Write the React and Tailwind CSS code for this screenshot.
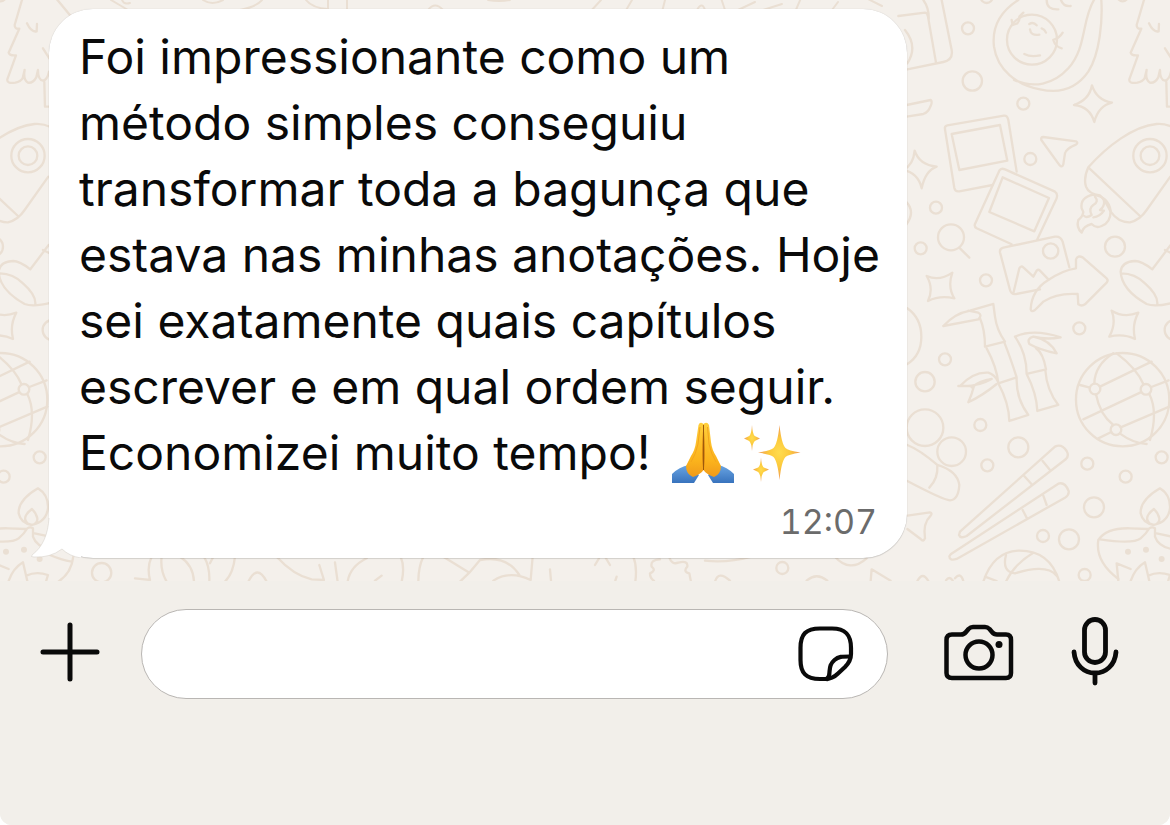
import React from "react";

function Dots({ points }) {
  return points.map(([x, y, r]) => <circle key={`${x}-${y}-${r}`} cx={x} cy={y} r={r} />);
}

/* One tile of doodles; it repeats every 1122 units. */
function Doodles() {
  return (
    <>
      <g transform="translate(900 0) scale(0.3333)">
        <Dots
          points={[
            [204, 85, 18], [217, 243, 29], [370, 311, 18], [391, 477, 18], [260, -9, 18], [668, -12, 16],
            [396, 119, 75], [750, 467, 50], [750, 467, 28],
          ]}
        />
        <path d="M-5 48 L75 38 Q82 38 84 50 L108 188 M70 0 Q88 25 86 60 M22 208 L130 186 Q160 180 155 150 L125 0 M15 90 Q55 140 22 190" />
        <path d="M355 0 C300 35 275 80 282 140 C292 210 350 255 420 268 C480 282 530 265 565 215 C600 160 608 60 604 0 M342 240 C400 265 460 255 505 205 C560 145 545 60 582 0" />
        <path d="M388 72 Q400 64 410 76 M390 88 Q392 108 418 104 M425 85 Q434 88 438 98 M373 162 Q392 172 420 166 M335 60 L338 75 L352 70 Q360 62 358 50 L370 38 M488 98 Q478 115 460 120 Q466 140 485 145 M440 0 Q440 30 475 28 M483 0 Q490 20 512 18" />
        <path d="M732 0 L710 75 Q710 88 724 86 L692 158 Q695 168 714 166 L688 238 Q686 252 712 248 Q728 244 734 235 L740 210 Q735 240 750 248 Q765 250 775 232 L780 210 Q780 240 795 242 Q808 240 813 215 M747 70 Q760 98 776 94 L777 72 M799 245 L801 320 L818 320 M795 145 L814 175 M836 -3 L880 50" />
        <path d="M576 256 Q590 300 636 308 Q595 318 583 366 Q570 320 522 315 Q568 300 576 256Z M44 452 Q58 495 110 500 Q76 512 65 565 Q55 520 10 510 Q40 495 44 452Z" />
        <path d="M350 515 L325 360 Q322 346 312 347 L142 376 Q133 378 135 388 L163 564 Q166 576 178 574 L278 555 M155 402 L300 375 L322 482 L178 510Z" />
        <path d="M335 733 L230 685 Q222 680 225 672 L298 512 Q303 503 315 508 L465 575 Q474 580 470 595 L412 718 M308 532 L447 594 L403 694 L268 636Z" />
        <path d="M430 411 L528 424 Q536 428 528 434 Q500 445 495 460 L490 493 Q486 504 479 496 L424 420 Q422 411 430 411Z" />
        <path d="M20 315 L92 300 Q98 305 92 318 Q85 338 70 342 L20 350" />
        <path d="M565 502 C620 440 700 378 770 372 Q795 370 820 382 M565 502 Q550 535 558 560 Q566 582 600 586 Q615 600 632 635 Q655 668 690 667 Q720 660 740 630 L811 530 M565 502 L720 648" />
      </g>
      <g transform="translate(900 190) scale(0.3333)">
        <Dots
          points={[
            [108, 53, 18], [62, 175, 18], [258, 271, 18], [645, 170, 30], [538, 415, 18], [135, 508, 18],
            [75, 575, 29], [824, 420, 30], [153, 142, 39], [452, 183, 23],
          ]}
        />
        <path d="M545 55 Q540 22 580 14 Q625 20 632 62 Q632 98 605 108 Q588 116 575 102 Q550 108 545 128 Q528 112 535 90 Q548 80 550 66Z M585 20 Q598 35 580 45 Q565 55 575 75 Q560 85 553 78 M612 30 Q615 50 600 60 L612 62 Q600 80 580 82" />
        <path d="M22 355 Q64 385 64 440 Q64 495 22 522 M18 35 Q48 65 18 105 M180 175 L208 203" />
        <path d="M80 258 Q118 275 157 248 Q142 290 163 325 Q120 315 84 333 Q102 295 80 258Z M635 362 Q672 385 715 368 Q695 405 705 447 Q670 430 628 440 Q650 400 635 362Z" />
        <path d="M508 232 L488 155 Q482 138 465 140 L310 173 Q298 176 300 187 L330 300 Q334 314 348 312 L420 298 M340 310 L358 235 Q363 226 370 232 L400 260 L410 242 Q415 237 420 242 L445 268" />
        <path d="M392 358 Q395 300 445 270 Q490 240 528 235 L528 208 Q533 195 548 202 L620 265 Q626 271 620 278 L555 343 Q545 350 535 343 L533 312 Q470 308 430 335 L405 360 Q394 368 392 358Z" />
        <path d="M812 165 L757 238 Q725 213 705 213 Q665 215 662 245 Q665 300 740 342 Q765 352 820 338 M664 250 Q705 250 735 280 Q775 315 772 343 M795 180 L815 190" />
        <path d="M130 408 Q165 370 210 362 L280 342 L285 380 Q290 420 315 455 L255 470 Q255 420 240 385 M130 408 L235 388 Q248 375 235 368 L205 362 M260 475 Q290 530 295 580 L350 562 Q330 500 312 455 M295 580 Q327 640 328 693 L385 675 Q348 625 350 565" />
        <path d="M345 440 Q380 490 380 552 L438 538 Q430 490 408 475 M345 440 Q400 415 482 442 Q440 450 400 440 Q380 445 388 462 Q420 480 470 490 Q450 450 400 440 M380 552 Q410 610 412 663 L475 645 Q440 600 436 540" />
        <path d="M180 588 Q220 545 265 548 Q285 555 292 572 M180 588 Q230 592 275 567 M215 592 Q240 572 275 567 M175 588 L222 588 Q215 615 205 637 Q250 615 290 582" />
      </g>
      <g transform="translate(900 385) scale(0.3333)">
        <Dots
          points={[
            [75, 128, 55], [155, 200, 43], [241, 120, 18], [262, 241, 18], [355, 187, 30], [562, 236, 18],
            [677, 275, 18], [785, 217, 18], [582, 367, 30], [429, 453, 18], [507, 463, 30], [554, 570, 18],
            [668, 44, 140], [585, 12, 16], [738, 13, 16], [648, 134, 16], [971, 563, 29],
          ]}
        />
        <path d="M550 103 L722 22 M754 6 L806 -14 M595 160 L634 141 M662 127 L808 65 M588 28 Q600 90 640 120 M660 146 Q700 175 740 177 M583 -5 Q585 -60 640 -95 M650 -95 Q710 -50 730 -3 M748 27 Q775 80 750 165 M540 0 L570 8 M600 5 L755 -70" />
        <path d="M22 180 Q60 195 112 240 Q172 258 178 300 Q175 345 150 346 Q130 345 22 288 M112 240 Q115 280 88 308" />
        <path d="M22 392 L90 382 Q98 384 92 392 Q68 415 75 460 Q70 472 62 462 L22 432" />
        <path d="M180 440 L465 185 Q485 175 500 198 Q508 212 498 222 L200 453 Q182 462 177 450Z M428 228 L450 255 M372 272 L395 298 M152 508 L475 296 Q495 290 506 318 Q508 330 495 338 L170 522 Q148 528 148 514Z M430 332 L440 360 M368 375 L382 402" />
        <path d="M250 590 Q280 500 355 497 Q450 495 478 590 M318 510 Q305 560 345 565 Q440 535 470 572 M400 503 Q340 540 318 590 M255 575 L290 588 M52 588 Q68 558 85 588 M138 586 Q148 572 158 586 M165 580 Q182 560 190 588" />
        <path d="M780 310 Q720 345 722 385 Q728 415 762 420 Q805 410 810 370 Q812 330 780 310Z M762 372 Q738 390 742 405 Q748 420 762 420 Q780 415 778 400 Q775 385 762 372Z" />
        <path d="M745 432 L690 430 Q620 428 595 465 Q585 530 655 582 M600 463 Q700 478 722 460 Q740 445 748 430 Q756 424 765 430 L765 455 Q775 485 816 492 M770 445 L816 455 M816 510 Q850 525 881 530 M886 515 Q880 565 841 590" />
        <path d="M655 588 L650 535 L692 552 M692 588 Q705 550 735 532 L748 588 M745 572 Q775 558 810 570 L804 590" />
        <g fill="#eadfd3" stroke="none">
          <Dots points={[[684, 500, 9], [738, 494, 9], [785, 522, 9]]} />
        </g>
      </g>
    </>
  );
}

function Wallpaper() {
  return (
    <svg
      className="absolute inset-0 size-full"
      viewBox="0 0 1170 581"
      preserveAspectRatio="xMinYMin slice"
      fill="none"
      stroke="#eadfd3"
      strokeWidth="7"
      strokeLinecap="round"
      strokeLinejoin="round"
      aria-hidden="true"
    >
      <Doodles />
      <g transform="translate(-1122 0)">
        <Doodles />
      </g>
      <path
        strokeWidth="2"
        d="M111 0 L128 10 M122 0 Q124 5 130 3 M203 0 Q212 6 223 0 M262 0 Q256 7 240 10 M306 0 Q312 8 328 9 M328 -2 V10 M347 -2 V10 M428 10 Q435 1 443 10 M488 0 Q499 2 510 0 M601 0 L590 12 M632 0 L625 12 M665 0 L662 12 M697 10 Q702 1 705 10 M721 -2 L725 10 M738 10 L755 2 M763 10 L782 4 M801 -2 L795 12 M838 2 L832 10 M868 -1 L882 6"
      />
      <g transform="translate(0 530) scale(0.3333)">
        <path d="M455 80 Q440 110 450 150 L405 145 M485 80 Q480 120 500 155 M540 80 Q580 105 582 155 M612 80 Q630 110 628 155 M640 80 L630 100 M705 80 Q700 130 675 155 M745 155 Q772 100 800 155 M830 80 Q880 135 935 148 L972 150 L958 105 M1005 97 L1013 155 M1043 155 Q1050 110 1100 85 M1125 152 L1145 137" />
      </g>
      <g transform="translate(400 530) scale(0.3333)">
        <circle cx="1147" cy="114" r="18" />
        <path d="M2 80 Q15 110 5 155 M70 80 Q55 110 55 155 M130 80 L208 128 L240 90 Q320 75 358 135 M208 128 L180 155 M280 152 Q330 120 392 150 L398 80 M450 118 L453 152 M585 105 L597 85 M615 80 L630 105 M650 140 L646 152 M700 80 Q712 110 706 155 M780 88 Q750 90 755 110 Q770 122 750 130 Q750 145 762 152 M808 82 Q815 105 835 98 Q865 90 862 110 Q848 125 868 130 L873 155 M915 92 Q980 100 1055 80 M945 155 Q955 120 990 152 M1220 152 Q1250 125 1282 152 M1305 80 Q1350 130 1400 85 M1412 155 L1415 118 L1472 152" />
      </g>
    </svg>
  );
}

function FoldedHands() {
  return (
    <svg viewBox="0 0 62 62" className="size-[62px]" role="img" aria-label="🙏">
      <defs>
        <linearGradient id="skin" x1="0" y1="0" x2="0" y2="1">
          <stop offset="0" stopColor="#ffcf3c" />
          <stop offset="0.7" stopColor="#fbb31c" />
          <stop offset="1" stopColor="#f09a1a" />
        </linearGradient>
        <linearGradient id="sleeve" x1="0" y1="0" x2="0" y2="1">
          <stop offset="0" stopColor="#6aa5e3" />
          <stop offset="1" stopColor="#3873bd" />
        </linearGradient>
      </defs>
      <path d="M0 52 Q7 45 17 43 L27 53 L22 61 H0Z M62 52 Q55 45 46 43 L36 53 L41 61 H62Z" fill="url(#sleeve)" />
      <path d="M31.500 2 Q28 -1 26.500 3 L24 20 Q23 28 19 34 L14 44 Q14 52 21 55 Q29 52 31.500 48 Q34 52 42 55 Q49 52 49 44 L44 34 Q40 28 39 20 L37 3 Q35 -1 31.500 2Z" fill="url(#skin)" />
      <path d="M31.500 2.500 Q30 20 30 33 Q30 42 31.500 48 Q33 42 33 33 Q33 20 31.500 2.500Z" fill="#dc8a14" />
      <path d="M31.500 3 V48" fill="none" stroke="#9c5a0c" strokeWidth="1" />
      <path d="M28 5 L26 22 Q24 32 19 40 M35.500 5 L37 22 Q39 32 44 40" fill="none" stroke="#f4a51c" strokeWidth="1" />
    </svg>
  );
}

function Sparkles() {
  return (
    <svg viewBox="0 0 62 62" className="size-[62px]" role="img" aria-label="✨">
      <defs>
        <radialGradient id="spark">
          <stop offset="0" stopColor="#ffdc4d" />
          <stop offset="0.5" stopColor="#fcc93c" />
          <stop offset="1" stopColor="#ee9a5c" />
        </radialGradient>
      </defs>
      <g fill="url(#spark)">
        <path d="M37.500 3 Q39.500 22 43.500 26 Q46 28.500 58.500 30.500 Q46 32.500 43.500 35 Q39.500 39 37.500 58 Q35.500 39 31.500 35 Q29 32.500 16 30.500 Q29 28.500 31.500 26 Q35.500 22 37.500 3Z" />
        <path d="M10 3 Q10.500 12 12.800 14 L18 16.500 L12.800 19 Q10.500 21 10 29 Q9.500 21 7.200 19 L2 16.500 L7.200 14 Q9.500 12 10 3Z" />
        <path d="M19 35.500 Q19.500 44 21.800 45.500 L27 47.500 L21.800 50 Q19.500 52 19 60 Q18.500 52 16.200 50 L11 47.500 L16.200 45.500 Q18.500 44 19 35.500Z" />
      </g>
    </svg>
  );
}

function Message() {
  return (
    <article className="relative mr-6 ml-[49px] max-w-[858px] rounded-[44px] bg-white pt-[15px] pr-4 pb-4 pl-[30px] shadow-[0_1px_1px_rgba(0,0,0,0.12),0_0_1px_rgba(0,0,0,0.2)]">
      <svg className="absolute bottom-0 -left-[18px] h-[60px] w-[50px]" viewBox="0 0 50 60" aria-hidden="true">
        <path d="M18 0 V20 C17 36 12 49 1 57 Q-1 59 3 59 Q19 60 31 51 Q40 59 50 60 L50 0Z" fill="#fff" />
        <path d="M18 20 C17 36 12 49 1 57 Q-1 59 3 59 Q19 60 31 51 Q38 58 50 60" fill="none" stroke="#d8d3cc" strokeWidth="0.6" />
      </svg>
      <p className="relative text-[48px] leading-[66px] text-[#0a0a0a]">
        Foi impressionante como um método simples conseguiu transformar toda a bagunça que estava nas minhas
        anotações. Hoje sei exatamente quais capítulos escrever e em qual ordem seguir. Economizei muito tempo!{" "}
        <span className="ml-2 inline-flex h-[62px] gap-2 align-[-14px] leading-none">
          <FoldedHands />
          <Sparkles />
        </span>
      </p>
      <time className="mt-4 block pr-[14px] text-right text-[34px] leading-10 text-[#6b6b6b] tabular-nums">12:07</time>
    </article>
  );
}

const iconProps = {
  fill: "none",
  stroke: "#0a0a0a",
  strokeWidth: 5,
  strokeLinecap: "round",
  strokeLinejoin: "round",
  "aria-hidden": true,
};

function Composer() {
  return (
    <footer className="flex-1 bg-[#f2efea] pt-7 pr-[51px] pb-7 pl-10">
      <div className="flex items-center">
        <button type="button" aria-label="Anexar" className="mr-[41px] shrink-0">
          <svg {...iconProps} viewBox="0 0 60 64" className="h-16 w-[60px]">
            <path d="M3 30 H57 M30 3 V57" />
          </svg>
        </button>
        <div className="mr-14 flex h-[90px] min-w-0 flex-1 items-center rounded-[45px] border border-[#b9b6b3] bg-white pr-[33px] pl-8">
          <input aria-label="Mensagem" className="h-full min-w-0 flex-1 bg-transparent text-[48px] outline-none" />
          <button type="button" aria-label="Figurinhas" className="shrink-0">
            <svg {...iconProps} strokeWidth="4.200" viewBox="0 0 56 56" className="size-14">
              <path d="M27 53 H22 C8 53 2.500 47 2.500 34 V22 C2.500 8 8 2.500 22 2.500 H34 C47 2.500 53 8 53 22 V28 C53 34 51 37 47 41 L40 47.500 C36 51.500 33 53 27 53" />
              <path d="M52 30.500 C44 30.500 40.500 30.500 36.500 34 C32 38 32 41 31.500 46 Q31.500 51 29 53" />
            </svg>
          </button>
        </div>
        <button type="button" aria-label="Câmera" className="mr-[57px] shrink-0">
          <svg {...iconProps} strokeWidth="4.500" viewBox="0 2 70 56" className="h-14 w-[70px] overflow-visible">
            <path d="M8 10.500 H17 Q20 10.500 22 8 L24.500 5 Q26.500 3 29 3 H41 Q43.500 3 45.500 5 L48 8 Q50 10.500 53 10.500 H62 Q67 10.500 67 16 V49 Q67 54 62 54 H8 Q2.500 54 2.500 49 V16 Q2.500 10.500 8 10.500Z" />
            <circle cx="35" cy="31" r="13.500" />
            <circle cx="55" cy="20.500" r="3.500" fill="#0a0a0a" stroke="none" />
          </svg>
        </button>
        <button type="button" aria-label="Gravar áudio" className="shrink-0">
          <svg {...iconProps} strokeWidth="4.800" viewBox="0 0 48 74" className="h-[74px] w-12">
            <rect x="13.500" y="2.500" width="21" height="43" rx="10.500" />
            <path d="M3 35 C4 48 13 56 24 56 C35 56 44 48 45 35 M24 56 V66" />
          </svg>
        </button>
      </div>
    </footer>
  );
}

export default function App() {
  return (
    <div className="min-h-screen bg-white font-['Inter','Liberation_Sans',sans-serif]">
      <div className="flex min-h-screen flex-col overflow-hidden rounded-b-[12px] bg-[#f2efea]">
        <main className="relative overflow-hidden bg-[#f4f0eb] pt-[9px] pb-[23px]">
          <Wallpaper />
          <Message />
        </main>
        <Composer />
      </div>
    </div>
  );
}
